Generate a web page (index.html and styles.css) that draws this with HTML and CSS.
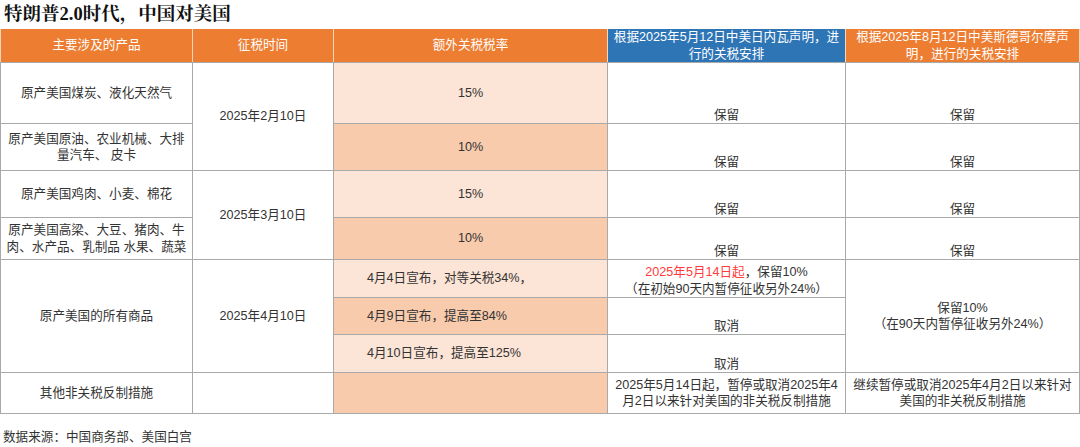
FILE: index.html
```html
<!DOCTYPE html>
<html lang="zh">
<head>
<meta charset="utf-8">
<link rel="stylesheet" href="styles.css">
</head>
<body>
<div class="page">
  <h1 class="title">特朗普2.0时代，中国对美国</h1>
  <table class="tbl">
    <colgroup>
      <col class="c1"><col class="c2"><col class="c3"><col class="c4"><col class="c5">
    </colgroup>
    <thead>
      <tr class="hr">
        <th class="h-or">主要涉及的产品</th>
        <th class="h-or">征税时间</th>
        <th class="h-or">额外关税税率</th>
        <th class="h-bl">根据2025年5月12日中美日内瓦声明，进<br>行的关税安排</th>
        <th class="h-or">根据2025年8月12日中美斯德哥尔摩声<br>明，进行的关税安排</th>
      </tr>
    </thead>
    <tbody>
      <tr class="r1">
        <td>原产美国煤炭、液化天然气</td>
        <td rowspan="2">2025年2月10日</td>
        <td class="lt">15%</td>
        <td class="bot">保留</td>
        <td class="bot">保留</td>
      </tr>
      <tr class="r2">
        <td>原产美国原油、农业机械、大排<br>量汽车、 皮卡</td>
        <td class="dk">10%</td>
        <td class="bot">保留</td>
        <td class="bot">保留</td>
      </tr>
      <tr class="r3">
        <td>原产美国鸡肉、小麦、棉花</td>
        <td rowspan="2">2025年3月10日</td>
        <td class="lt">15%</td>
        <td class="bot">保留</td>
        <td class="bot">保留</td>
      </tr>
      <tr class="r4">
        <td>原产美国高梁、大豆、猪肉、牛<br>肉、水产品、乳制品 水果、蔬菜</td>
        <td class="dk">10%</td>
        <td class="bot">保留</td>
        <td class="bot">保留</td>
      </tr>
      <tr class="r5">
        <td rowspan="3">原产美国的所有商品</td>
        <td rowspan="3">2025年4月10日</td>
        <td class="lt left">4月4日宣布，对等关税34%，</td>
        <td class="bot"><span class="red">2025年5月14日起</span>，保留10%<br>（在初始90天内暂停征收另外24%）</td>
        <td rowspan="3">保留10%<br>（在90天内暂停征收另外24%）</td>
      </tr>
      <tr class="r6">
        <td class="dk left">4月9日宣布，提高至84%</td>
        <td class="bot">取消</td>
      </tr>
      <tr class="r7">
        <td class="lt left">4月10日宣布，提高至125%</td>
        <td class="bot">取消</td>
      </tr>
      <tr class="r8">
        <td>其他非关税反制措施</td>
        <td></td>
        <td class="dk"></td>
        <td>2025年5月14日起，暂停或取消2025年4<br>月2日以来针对美国的非关税反制措施</td>
        <td>继续暂停或取消2025年4月2日以来针对<br>美国的非关税反制措施</td>
      </tr>
    </tbody>
  </table>
  <p class="src">数据来源：中国商务部、美国白宫</p>
</div>
</body>
</html>
```

FILE: styles.css
```css
html, body {
  margin: 0;
  padding: 0;
  background: #ffffff;
}
.page {
  width: 1080px;
  font-family: "Liberation Sans", "Noto Sans CJK SC", sans-serif;
  color: #333333;
}
.title {
  margin: 0;
  padding: 3px 0 0 4px;
  height: 26px;
  box-sizing: border-box;
  font-family: "Liberation Serif", "Noto Serif CJK SC", "Noto Sans CJK SC", serif;
  font-weight: 700;
  font-size: 18.5px;
  line-height: 22px;
  color: #111111;
}
.tbl {
  margin-top: 3px;
  border-collapse: collapse;
  table-layout: fixed;
  width: 1079px;
  font-size: 12.6px;
  line-height: 16.5px;
}
.c1 { width: 192px; }
.c2 { width: 141px; }
.c3 { width: 274px; }
.c4 { width: 238px; }
.c5 { width: 234px; }
.tbl th, .tbl td {
  border: 1px solid #a9a9a9;
  padding: 0;
  text-align: center;
  vertical-align: middle;
  white-space: nowrap;
}
.tbl th {
  font-weight: 400;
  color: #ffffff;
  border-color: #f8d6bc;
  border-top: none;
  border-bottom-color: #a9a9a9;
}
.h-or { background: #ed7d31; }
.h-bl { background: #2e75b6; }
.hr { height: 33px; }
.r1 { height: 61px; }
.r2 { height: 47px; }
.r3 { height: 47px; }
.r4 { height: 42px; }
.r5 { height: 38px; }
.r6 { height: 37px; }
.r7 { height: 38px; }
.r8 { height: 41px; }
.lt { background: #fce4d6; }
.dk { background: #f8cbad; }
.left { text-align: left !important; padding-left: 33px !important; }
.tbl td.bot { vertical-align: bottom; }
.red { color: #ff3b3b; }
.src {
  margin: 0;
  padding: 15px 0 0 3px;
  font-size: 12.6px;
  line-height: 16px;
  color: #333333;
}
```
